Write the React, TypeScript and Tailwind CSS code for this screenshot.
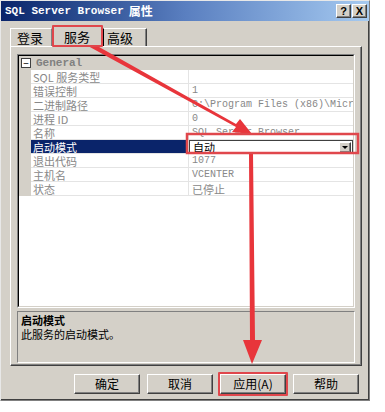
import React from "react";

const cjk = '"Noto Sans CJK SC", "Liberation Sans", sans-serif';
const mono = '"Liberation Mono", "Noto Sans CJK SC", monospace';

type Row = { name: string; value: string; selected?: boolean };

const rows: Row[] = [
  { name: "SQL 服务类型", value: "" },
  { name: "错误控制", value: "1" },
  { name: "二进制路径", value: "C:\\Program Files (x86)\\Microsoft SQL Server" },
  { name: "进程 ID", value: "0" },
  { name: "名称", value: "SQL Server Browser" },
  { name: "启动模式", value: "自动", selected: true },
  { name: "退出代码", value: "1077" },
  { name: "主机名", value: "VCENTER" },
  { name: "状态", value: "已停止" },
];

const raised =
  "border border-t-white border-l-white border-r-[#404040] border-b-[#404040] shadow-[inset_-1px_-1px_0_#808080]";

function Button({ label, highlight }: { label: string; highlight?: boolean }) {
  return (
    <div className={highlight ? "rounded-[1px] p-[2px] bg-[#e0474c]" : "p-[2px]"}>
      <div
        className={`flex h-[20px] w-[66px] items-center justify-center bg-[#d4d0c8] text-[12px] leading-none text-black ${raised}`}
        style={{ fontFamily: cjk }}
      >
        {label}
      </div>
    </div>
  );
}

export default function App() {
  return (
    <div className="relative h-[412px] w-[385px] overflow-hidden bg-white">
      <div className="flex h-[401px] w-[370px] flex-col border border-[#808080] border-t-[#e8e8e8] border-l-[#e8e8e8] bg-[#d4d0c8] shadow-[inset_-1px_-1px_0_#404040]">
        {/* title bar */}
        <div className="flex h-[20px] items-center justify-between bg-gradient-to-r from-[#0a246a] via-[#5a7fc0] to-[#a6caf0] pl-[4px] pr-[2px]">
          <div className="flex items-center gap-[5px] text-white">
            <span className="text-[11px] font-bold leading-none" style={{ fontFamily: mono }}>
              SQL Server Browser
            </span>
            <span className="text-[12px] font-bold leading-none" style={{ fontFamily: cjk }}>
              属性
            </span>
          </div>
          <div className="flex gap-[1px]">
            <div className={`flex h-[14px] w-[15px] items-center justify-center bg-[#d4d0c8] text-[11px] font-bold leading-none text-black ${raised}`} style={{ fontFamily: "Liberation Sans, sans-serif" }}>
              ?
            </div>
            <div className={`flex h-[14px] w-[15px] items-center justify-center bg-[#d4d0c8] text-[11px] font-bold leading-none text-black ${raised}`} style={{ fontFamily: "Liberation Sans, sans-serif" }}>
              X
            </div>
          </div>
        </div>

        {/* tabs */}
        <div className="ml-[9px] mt-[5px] flex h-[20px] items-end text-[13px] leading-none text-black" style={{ fontFamily: cjk }}>
          <div className="flex h-[18px] w-[42px] items-center border border-b-0 border-l-white border-t-white border-r-[#808080] pl-[6px]">
            登录
          </div>
          <div className="relative z-10 -mb-[1px] rounded-[1px] border-2 border-[#e0474c] bg-[#d4d0c8]">
            <div className="flex h-[18px] w-[47px] items-center pl-[10px]">服务</div>
          </div>
          <div className="flex h-[18px] w-[44px] items-center border border-b-0 border-t-white border-r-[#404040] pl-[3px] shadow-[inset_-1px_0_0_#808080]">
            高级
          </div>
        </div>

        {/* tab panel */}
        <div className="ml-[9px] flex h-[320px] w-[352px] flex-col border border-l-white border-t-white border-r-[#404040] border-b-[#404040] px-[6px] pt-[7px] shadow-[inset_-1px_-1px_0_#808080]">
          {/* property grid */}
          <div className="flex h-[254px] flex-col border border-[#808080] border-r-white border-b-white">
            <div className="flex h-full flex-col border border-black border-r-[#d4d0c8] border-b-[#d4d0c8] bg-white">
              <div className="flex h-[14px] items-center bg-[#d4d0c8]">
                <div className="ml-[2px] flex h-[10px] w-[10px] items-center justify-center border border-[#404040] bg-white text-[10px] leading-none text-black">
                  −
                </div>
                <span className="ml-[5px] text-[11px] font-bold leading-none text-[#808080]" style={{ fontFamily: mono }}>
                  General
                </span>
              </div>
              {rows.map((r) => (
                <div key={r.name} className="flex h-[14px]">
                  <div className="w-[12px] shrink-0 bg-[#d4d0c8]" />
                  <div
                    className={`flex w-[158px] shrink-0 items-center overflow-hidden whitespace-nowrap border-b border-r border-[#e4e4e4] pl-[2px] text-[11px] leading-[12px] ${
                      r.selected ? "bg-[#0a246a] text-white" : "text-[#888888]"
                    }`}
                    style={{ fontFamily: cjk }}
                  >
                    {r.name}
                  </div>
                  {r.selected ? (
                    <div className="flex flex-1 items-center justify-between border border-[#404040] bg-white pl-[3px] pr-[1px]">
                      <span className="text-[11px] leading-[12px] text-black" style={{ fontFamily: cjk }}>
                        {r.value}
                      </span>
                      <div className={`flex h-[11px] w-[12px] items-center justify-center bg-[#d4d0c8] ${raised}`}>
                        <div className="h-0 w-0 border-x-[3px] border-t-[3px] border-x-transparent border-t-black" />
                      </div>
                    </div>
                  ) : (
                    <div
                      className="flex flex-1 items-center overflow-hidden whitespace-nowrap border-b border-[#e4e4e4] pl-[3px] text-[10px] leading-[12px] text-[#888888]"
                      style={{ fontFamily: /[\u4e00-\u9fff]/.test(r.value) ? cjk : mono, fontSize: /[\u4e00-\u9fff]/.test(r.value) ? 11 : undefined }}
                    >
                      {r.value}
                    </div>
                  )}
                </div>
              ))}
              <div className="flex-1" />
            </div>
          </div>

          {/* description */}
          <div className="mt-[3px] flex h-[52px] flex-col border border-[#808080] border-r-white border-b-white px-[3px] pt-[1px] text-[11px] text-black" style={{ fontFamily: cjk }}>
            <span className="font-bold leading-[14px]">启动模式</span>
            <span className="leading-[14px]">此服务的启动模式。</span>
          </div>
        </div>

        {/* buttons */}
        <div className="mt-[6px] flex justify-end gap-[3px] pr-[8px]">
          <Button label="确定" />
          <Button label="取消" />
          <Button label="应用(A)" highlight />
          <Button label="帮助" />
        </div>
      </div>

      {/* annotation arrows */}
      <svg className="pointer-events-none absolute left-0 top-0" width="385" height="412">
        <polygon points="88,46 92,43 236,124 240,119 252,134 232,132 236,127" fill="#e8353b" />
        <polygon points="249,153 253,153 255,340 262,340 252,364 243,340 250,340" fill="#e8353b" />
        <rect x="187" y="134" width="171" height="19" fill="none" stroke="#e0474c" strokeWidth="2.5" />
      </svg>
    </div>
  );
}
